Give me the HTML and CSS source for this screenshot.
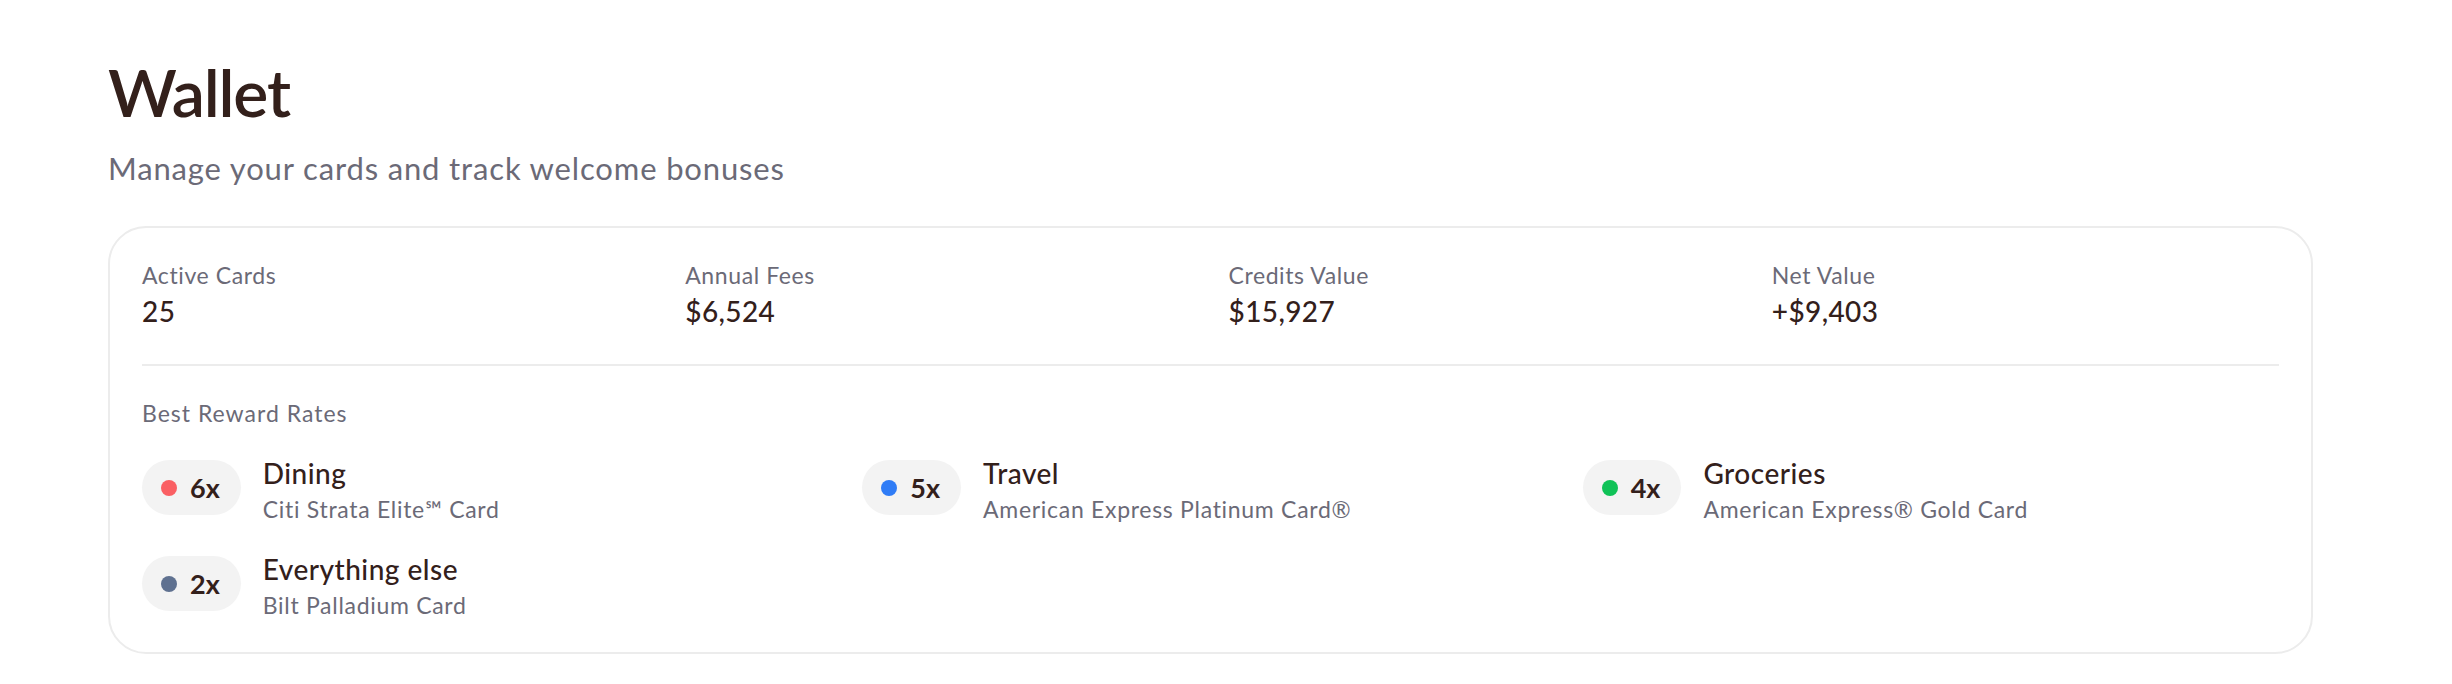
FILE: index.html
```html
<!DOCTYPE html>
<html lang="en">
<head>
<meta charset="utf-8">
<title>Wallet</title>
<link rel="stylesheet" href="styles.css">
</head>
<body>
<main class="page">
  <header class="page-head">
    <h1 class="title">Wallet</h1>
    <p class="subtitle">Manage your cards and track welcome bonuses</p>
  </header>
  <section class="card">
    <div class="stats">
      <div class="stat"><div class="stat-label">Active Cards</div><div class="stat-value">25</div></div>
      <div class="stat"><div class="stat-label">Annual Fees</div><div class="stat-value">$6,524</div></div>
      <div class="stat"><div class="stat-label">Credits Value</div><div class="stat-value">$15,927</div></div>
      <div class="stat"><div class="stat-label">Net Value</div><div class="stat-value">+$9,403</div></div>
    </div>
    <div class="rewards">
      <div class="rewards-label">Best Reward Rates</div>
      <div class="reward-grid">
        <div class="reward">
          <div class="pill"><span class="dot dot-red"></span><span class="rate">6x</span></div>
          <div class="reward-text"><div class="category">Dining</div><div class="card-name">Citi Strata Elite℠ Card</div></div>
        </div>
        <div class="reward">
          <div class="pill"><span class="dot dot-blue"></span><span class="rate">5x</span></div>
          <div class="reward-text"><div class="category">Travel</div><div class="card-name">American Express Platinum Card®</div></div>
        </div>
        <div class="reward">
          <div class="pill"><span class="dot dot-green"></span><span class="rate">4x</span></div>
          <div class="reward-text"><div class="category">Groceries</div><div class="card-name">American Express® Gold Card</div></div>
        </div>
        <div class="reward">
          <div class="pill"><span class="dot dot-slate"></span><span class="rate">2x</span></div>
          <div class="reward-text"><div class="category">Everything else</div><div class="card-name">Bilt Palladium Card</div></div>
        </div>
      </div>
    </div>
  </section>
</main>
</body>
</html>
```

FILE: styles.css
```css
* { box-sizing: border-box; }
html, body { margin: 0; padding: 0; background: #ffffff; }
body {
  font-family: Lato, "Noto Sans", "DejaVu Sans", sans-serif;
  color: #33201b;
}
.page {
  width: 2205px;
  margin-left: 108px;
  padding-top: 56px;
}
.page-head { display: flex; flex-direction: column; }
.title {
  margin: 0;
  font-size: 66px;
  line-height: 72.6px;
  font-weight: 600;
  color: #33201b;
  letter-spacing: -1.2px;
}
.subtitle {
  margin: 17px 0 0 0;
  font-size: 31px;
  line-height: 45px;
  color: #6b6a77;
  letter-spacing: 0.85px;
}
.card {
  margin-top: 35px;
  border: 2px solid #ececec;
  border-radius: 38px;
  padding: 32px;
  background: #fff;
}
.stats {
  display: grid;
  grid-template-columns: repeat(4, 1fr);
  column-gap: 36px;
  padding-bottom: 32px;
  border-bottom: 2px solid #ececec;
}
.stat-label {
  font-size: 23px;
  line-height: 30px;
  color: #6b6a77;
  letter-spacing: 0.6px;
}
.stat-value {
  font-size: 28px;
  line-height: 42px;
  font-weight: 500;
  color: #33201b;
  letter-spacing: 0.4px;
}
.rewards { padding-top: 32px; }
.rewards-label {
  font-size: 23px;
  line-height: 30px;
  color: #6b6a77;
  letter-spacing: 1px;
  margin-bottom: 24px;
}
.reward-grid {
  display: grid;
  grid-template-columns: repeat(3, 1fr);
  gap: 24px;
}
.reward {
  display: flex;
  align-items: center;
  gap: 22px;
}
.pill {
  display: flex;
  align-items: center;
  gap: 13px;
  height: 55px;
  padding: 0 21px 0 19px;
  border-radius: 28px;
  background: #f3f3f3;
}
.dot {
  width: 16px;
  height: 16px;
  border-radius: 50%;
  flex: none;
}
.dot-red { background: #fa5f63; }
.dot-blue { background: #2f7cf6; }
.dot-green { background: #10c257; }
.dot-slate { background: #5f7190; }
.rate {
  font-size: 27px;
  line-height: 32px;
  font-weight: 700;
  color: #33201b;
}
.reward-text { display: flex; flex-direction: column; }
.category {
  font-size: 28px;
  line-height: 42px;
  font-weight: 500;
  color: #33201b;
  letter-spacing: 0.5px;
}
.card-name {
  font-size: 23px;
  line-height: 30px;
  color: #6b6a77;
  letter-spacing: 0.7px;
}
```
